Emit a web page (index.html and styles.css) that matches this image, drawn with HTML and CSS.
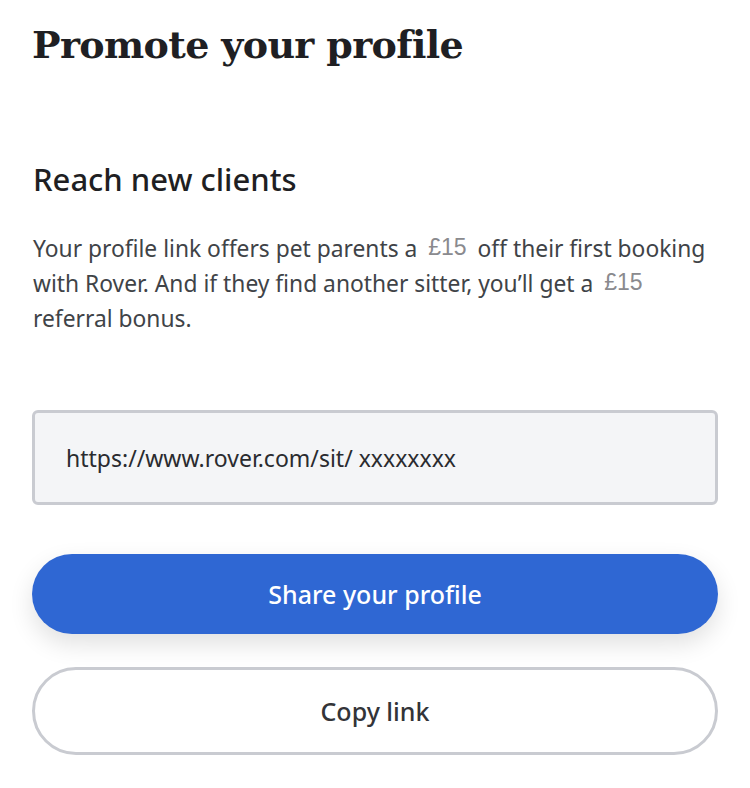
FILE: index.html
```html
<!DOCTYPE html>
<html>
<head>
<meta charset="utf-8">
<link rel="stylesheet" href="styles.css">
</head>
<body>
<main class="page">
  <h1 class="title">Promote your profile</h1>
  <h2 class="subtitle">Reach new clients</h2>
  <p class="body">Your profile link offers pet parents a <span class="amount">£15</span> off their first booking with Rover. And if they find another sitter, you’ll get a <span class="amount">£15</span> referral bonus.</p>
  <div class="link-box">https://www.rover.com/sit/ xxxxxxxx</div>
  <button class="btn btn-primary">Share your profile</button>
  <button class="btn btn-secondary">Copy link</button>
</main>
</body>
</html>
```

FILE: styles.css
```css
html, body {
  margin: 0;
  padding: 0;
  background: #ffffff;
}
.page {
  display: flex;
  flex-direction: column;
  padding: 0 32px;
  font-family: "Noto Sans", "Lato", sans-serif;
}
.title {
  margin: 21px 0 0 0;
  font-family: "DejaVu Serif", serif;
  font-weight: bold;
  font-size: 38px;
  line-height: 48px;
  color: #1f1f23;
  letter-spacing: -0.65px;
}
.subtitle {
  margin: 91px 0 0 1px;
  font-size: 31px;
  font-weight: 500;
  line-height: 38px;
  color: #1f1f23;
}
.body {
  margin: 33px 0 0 1px;
  font-size: 22.8px;
  line-height: 35px;
  color: #404347;
}
.amount {
  display: inline-block;
  font-family: "Liberation Sans", sans-serif;
  color: #8a8a8e;
  font-size: 23px;
  line-height: 30px;
  padding: 0 5px;
  vertical-align: 2px;
}
.link-box {
  margin-top: 74px;
  height: 95px;
  box-sizing: border-box;
  border: 3px solid #c9cbd1;
  border-radius: 6px;
  background: #f4f5f7;
  padding: 0 0 0 31px;
  display: flex;
  align-items: center;
  font-size: 23px;
  color: #2a2b2f;
}
.btn {
  font-family: "Noto Sans", "Lato", sans-serif;
  box-sizing: border-box;
  width: 100%;
  border-radius: 999px;
  font-size: 25px;
  font-weight: 500;
  cursor: pointer;
}
.btn-primary {
  margin-top: 49px;
  height: 80px;
  border: none;
  background: #2f67d3;
  color: #ffffff;
  box-shadow: 0 10px 24px rgba(0, 0, 0, 0.12);
}
.btn-secondary {
  margin-top: 33px;
  height: 88px;
  border: 3px solid #c9cbd1;
  background: #ffffff;
  color: #333438;
}
```
